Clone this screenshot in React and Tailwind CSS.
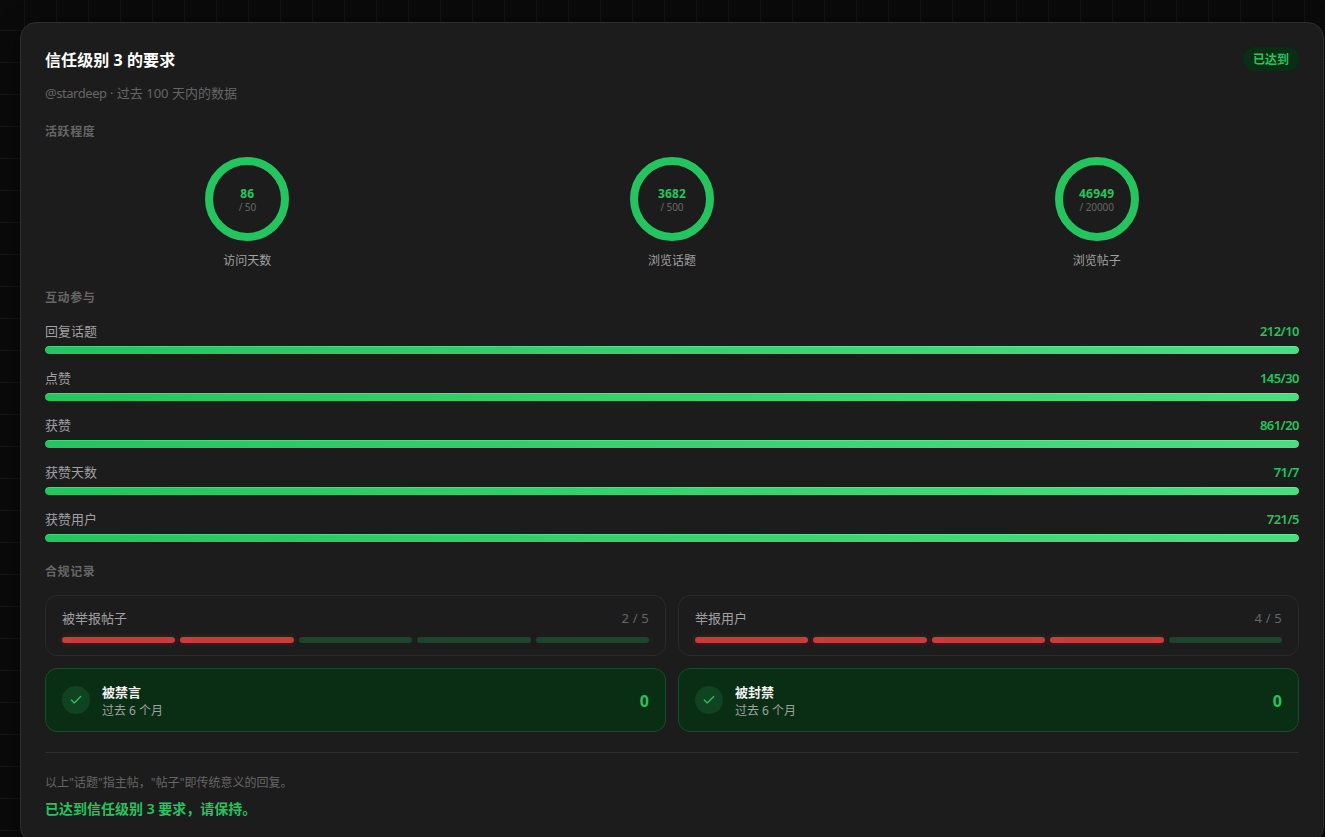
import { Check } from 'lucide-react';

const RINGS = [
  { label: '访问天数', value: 86, target: 50 },
  { label: '浏览话题', value: 3682, target: 500 },
  { label: '浏览帖子', value: 46949, target: 20000 },
];

const BARS = [
  { label: '回复话题', value: 212, target: 10 },
  { label: '点赞', value: 145, target: 30 },
  { label: '获赞', value: 861, target: 20 },
  { label: '获赞天数', value: 71, target: 7 },
  { label: '获赞用户', value: 721, target: 5 },
];

const QUOTAS = [
  { label: '被举报帖子', used: 2, max: 5 },
  { label: '举报用户', used: 4, max: 5 },
];

const VETOES = [
  { label: '被禁言', period: '过去 6 个月', count: 0 },
  { label: '被封禁', period: '过去 6 个月', count: 0 },
];

const SectionTitle = ({ children }) => (
  <h2 className="text-xs leading-4 font-semibold tracking-[0.6px] text-[#666]">{children}</h2>
);

const Ring = ({ label, value, target }) => {
  const length = 2 * Math.PI * 38;
  const offset = length * (1 - Math.min(value / target, 1));

  return (
    <div className="flex flex-col items-center">
      <div className="grid w-[84px] h-[84px] place-items-center">
        <svg viewBox="0 0 84 84" className="col-start-1 row-start-1 w-[84px] h-[84px] -rotate-90">
          <circle cx="42" cy="42" r="38" fill="none" stroke="#2a2a2a" strokeWidth="8" />
          <circle
            cx="42"
            cy="42"
            r="38"
            fill="none"
            stroke="#22c55e"
            strokeWidth="8"
            strokeDasharray={length}
            strokeDashoffset={offset}
          />
        </svg>
        <div className="col-start-1 row-start-1 flex flex-col items-center pt-0.5">
          <span className="text-xs leading-[14px] font-bold tracking-[0.15px] text-[#22c55e]">{value}</span>
          <span className="text-[10px] leading-3 tracking-[-0.1px] text-[#666]">/ {target}</span>
        </div>
      </div>
      <span className="mt-3 text-xs leading-4 text-[#a0a0a0]">{label}</span>
    </div>
  );
};

const Bar = ({ label, value, target }) => (
  <div>
    <div className="flex justify-between text-[13px] leading-5">
      <span className="text-[#a0a0a0]">{label}</span>
      <span className="font-semibold tracking-[-0.55px] text-[#22c55e]">{value}/{target}</span>
    </div>
    <div className="mt-[5px] h-2 overflow-hidden rounded bg-[#2a2a2a]">
      <div
        className="h-full rounded bg-linear-to-r from-[#22c55e] to-[#4ade80] shadow-[inset_0_1px_0_rgba(255,255,255,0.2)]"
        style={{ width: `${Math.min(value / target, 1) * 100}%` }}
      />
    </div>
  </div>
);

const Quota = ({ label, used, max }) => (
  <div className="h-[61px] rounded-xl border border-[#2a2a2a] px-4 pt-3">
    <div className="flex justify-between text-[13px] leading-5">
      <span className="text-[#a0a0a0]">{label}</span>
      <span className="tracking-[0.2px] text-[#666]">{used} / {max}</span>
    </div>
    <div className="mt-[9px] flex gap-[5.4px]">
      {Array.from({ length: max }, (_, i) => (
        <div
          key={i}
          className={`h-1.5 flex-1 rounded-[3px] ${
            i < used ? 'bg-[#c83c3c] shadow-[0_0_6px_rgba(239,68,68,0.22)]' : 'bg-[#1e442b]'
          }`}
        />
      ))}
    </div>
  </div>
);

const Veto = ({ label, period, count }) => (
  <div className="flex h-16 items-center rounded-xl border border-[#125026] bg-[#0a2e14] px-4">
    <div className="flex w-7 h-7 items-center justify-center rounded-full bg-[#0f4322]">
      <Check className="w-3.5 h-3.5 text-[#22c55e]" strokeWidth={2.25} />
    </div>
    <div className="ml-3 flex-1 pt-[3px]">
      <p className="text-[13px] leading-[19px] font-semibold text-[#f0f0f0]">{label}</p>
      <p className="text-xs leading-[18px] text-[#a0a0a0]">{period}</p>
    </div>
    <span className="pt-0.5 text-base leading-6 font-bold text-[#22c55e]">{count}</span>
  </div>
);

const App = () => (
  <div className="h-screen overflow-hidden bg-[#0a0a0a] bg-[linear-gradient(to_right,#141414_1px,transparent_1px),linear-gradient(to_bottom,#141414_1px,transparent_1px)] bg-[size:32px_32px] bg-[position:24px_30px] pl-5 pt-[22px] font-['Noto_Sans','Noto_Sans_CJK_SC',sans-serif]">
    <div className="w-[1304px] h-[821px] rounded-2xl border border-[#2e2e2e] bg-[#1c1c1c] px-6 pt-6 shadow-[0_4px_24px_rgba(0,0,0,0.4)]">
      <div className="flex items-start justify-between">
        <h1 className="mt-px text-base leading-6 font-bold tracking-[0.08px] text-white">信任级别 3 的要求</h1>
        <span className="rounded-full bg-[#0a2e14] px-2.5 pt-[5px] pb-[3px] text-xs leading-4 font-semibold text-[#22c55e]">已达到</span>
      </div>
      <p className="mt-[11px] text-[13px] leading-5 text-[#666]">
        <span className="tracking-[-0.45px]">@stardeep</span> · 过去 100 天内的数据
      </p>

      <div className="mt-[21px]">
        <SectionTitle>活跃程度</SectionTitle>
        <div className="mt-[17px] grid grid-cols-3 gap-5">
          {RINGS.map((item) => (
            <Ring key={item.label} {...item} />
          ))}
        </div>
      </div>

      <div className="mt-[21px]">
        <SectionTitle>互动参与</SectionTitle>
        <div className="mt-[15px] flex flex-col gap-3.5">
          {BARS.map((item) => (
            <Bar key={item.label} {...item} />
          ))}
        </div>
      </div>

      <div className="mt-[22px]">
        <SectionTitle>合规记录</SectionTitle>
        <div className="mt-[15px] grid grid-cols-2 gap-3">
          {QUOTAS.map((item) => (
            <Quota key={item.label} {...item} />
          ))}
          {VETOES.map((item) => (
            <Veto key={item.label} {...item} />
          ))}
        </div>
      </div>

      <div className="mt-5 border-t border-[#2e2e2e] pt-5">
        <p className="text-xs leading-5 text-[#666]">以上"话题"指主帖，"帖子"即传统意义的回复。</p>
        <p className="mt-1.5 text-sm leading-5 font-semibold text-[#22c55e]">已达到信任级别 3 要求，请保持。</p>
      </div>
    </div>
  </div>
);

export default App;
